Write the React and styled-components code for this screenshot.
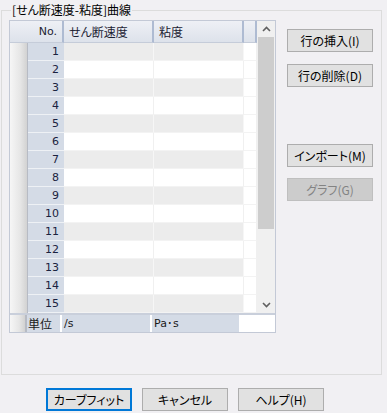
import React from 'react';
import styled, { createGlobalStyle } from 'styled-components';

const GlobalStyle = createGlobalStyle`
  html, body {
    margin: 0;
    padding: 0;
    background: #f1f0f3;
  }
  body {
    font-family: "Noto Sans CJK JP", "Noto Sans", sans-serif;
    font-size: 12px;
    font-feature-settings: "palt";
    color: #000;
  }
`;

const Page = styled.div`
  width: 387px;
  height: 413px;
  box-sizing: border-box;
  padding-top: 10px;
  background: #f1f0f3;
`;

const Group = styled.div`
  margin: 0 5px 0 1px;
  height: 365px;
  box-sizing: border-box;
  border: 1px solid #dcdcdc;
  padding: 0 0 0 7px;
`;

const Legend = styled.div`
  display: table;
  margin: -9px 0 0 2px;
  padding: 0 1px;
  height: 16px;
  line-height: 16px;
  background: #f1f0f3;
  font-size: 12px;
  white-space: nowrap;
`;

const Content = styled.div`
  display: flex;
  align-items: flex-start;
  gap: 11px;
  margin-top: 2px;
`;

const TableFrame = styled.div`
  width: 267px;
  height: 313px;
  box-sizing: border-box;
  border: 1px solid #c3c9d6;
  background: #fff;
  display: flex;
  flex-direction: column;
`;

const Body = styled.div`
  display: flex;
  height: 292px;
`;

const Grid = styled.div`
  display: grid;
  grid-template-columns: 18px 36px 90px 90px 13px;
  grid-template-rows: 22px repeat(15, 18px);
`;

const HeadCell = styled.div`
  grid-column: ${p => p.$span || 'auto'};
  box-sizing: border-box;
  background: linear-gradient(#eef0f5, #dde2eb);
  border-right: 2px solid #aebbd2;
  border-bottom: 1px solid #c5ccd9;
  display: flex;
  align-items: center;
  justify-content: ${p => (p.$right ? 'flex-end' : 'flex-start')};
  padding: ${p => (p.$right ? '0 5px 0 0' : '0 0 0 5px')};
  font-family: ${p => (p.$latin ? '"DejaVu Sans", sans-serif' : 'inherit')};
  font-size: ${p => (p.$latin ? '11px' : '12px')};
  color: #1c2233;
  white-space: nowrap;
`;

const Strip = styled.div`
  grid-column: 1;
  grid-row: ${p => p.$rows || 'auto'};
  box-sizing: border-box;
  background: linear-gradient(to right, #f6f6f6, #e6e6e6 60%, #d2d2d2);
  border-right: 1px solid #b7bbc4;
`;

const NumCell = styled.div`
  box-sizing: border-box;
  background: #d4dbe6;
  border-bottom: 1px solid #eef1f5;
  display: flex;
  align-items: center;
  justify-content: flex-end;
  padding-right: 5px;
  font-family: "DejaVu Sans", sans-serif;
  font-size: 11px;
  color: #1a2240;
`;

const DataCell = styled.div`
  box-sizing: border-box;
  background: ${p => (p.$odd ? '#ececec' : '#ffffff')};
  border-right: 1px solid ${p => (p.$odd ? '#f6f6f6' : '#f0f0f0')};
  border-bottom: 1px solid #f3f3f3;
`;

const Scrollbar = styled.div`
  width: 18px;
  display: flex;
  flex-direction: column;
  background: #f0f0f0;
`;

const Arrow = styled.div`
  height: 16px;
  display: flex;
  align-items: center;
  justify-content: center;
`;

const Thumb = styled.div`
  height: 192px;
  margin: 0 1px;
  background: #cdcdcd;
`;

const Track = styled.div`
  flex: 1;
`;

const FooterLine = styled.div`
  height: 2px;
  background: #c9cfdb;
`;

const Footer = styled.div`
  display: grid;
  grid-template-columns: 17px 35px 90px 89px 1fr;
  height: 16px;
`;

const FootStrip = styled.div`
  background: linear-gradient(to right, #f6f6f6, #e6e6e6 60%, #d2d2d2);
  border-right: 2px solid #b7bbc4;
`;

const FootCell = styled.div`
  box-sizing: border-box;
  background: ${p => (p.$blank ? '#fff' : '#d4dbe6')};
  border-right: 2px solid #fff;
  display: flex;
  align-items: center;
  padding-left: ${p => (p.$latin ? '2px' : '1px')};
  font-family: ${p => (p.$latin ? '"DejaVu Sans", sans-serif' : 'inherit')};
  font-size: ${p => (p.$latin ? '11px' : '12px')};
  color: #1a1a1a;
  white-space: nowrap;
`;

const SideButtons = styled.div`
  display: flex;
  flex-direction: column;
  padding-top: 9px;
`;

const Button = styled.div`
  width: ${p => p.$w || 86}px;
  height: 23px;
  box-sizing: border-box;
  margin-top: ${p => p.$top || 0}px;
  background: ${p => (p.$disabled ? '#cccccc' : '#e1e1e1')};
  border: ${p => (p.$focus ? '2px solid #0078d7' : `1px solid ${p.$disabled ? '#bfbfbf' : '#adadad'}`)};
  color: ${p => (p.$disabled ? '#838383' : '#000')};
  display: flex;
  align-items: center;
  justify-content: center;
  font-size: 12px;
  white-space: nowrap;
`;

const BottomBar = styled.div`
  display: flex;
  gap: 10px;
  padding: 13px 0 0 46px;
`;

const Chevron = ({ up }) => (
  <svg width="9" height="6" viewBox="0 0 9 6">
    <path
      d={up ? 'M1 5 L4.5 1.5 L8 5' : 'M1 1 L4.5 4.5 L8 1'}
      fill="none"
      stroke="#606060"
      strokeWidth="1.6"
    />
  </svg>
);

const rows = Array.from({ length: 15 }, (_, i) => i + 1);

export default function App() {
  return (
    <Page>
      <GlobalStyle />
      <Group>
        <Legend>[せん断速度-粘度]曲線</Legend>
        <Content>
          <TableFrame>
            <Body>
              <Grid>
                <HeadCell $span="1 / 3" $right $latin>No.</HeadCell>
                <HeadCell>せん断速度</HeadCell>
                <HeadCell>粘度</HeadCell>
                <HeadCell />
                <Strip $rows="2 / span 15" />
                {rows.map(n => (
                  <React.Fragment key={n}>
                    <NumCell>{n}</NumCell>
                    <DataCell $odd={n % 2 === 1} />
                    <DataCell $odd={n % 2 === 1} />
                    <DataCell />
                  </React.Fragment>
                ))}
              </Grid>
              <Scrollbar>
                <Arrow><Chevron up /></Arrow>
                <Thumb />
                <Track />
                <Arrow><Chevron /></Arrow>
              </Scrollbar>
            </Body>
            <FooterLine />
            <Footer>
              <FootStrip />
              <FootCell>単位</FootCell>
              <FootCell $latin>/s</FootCell>
              <FootCell $latin>Pa･s</FootCell>
              <FootCell $blank />
            </Footer>
          </TableFrame>
          <SideButtons>
            <Button>行の挿入(I)</Button>
            <Button $top={12}>行の削除(D)</Button>
            <Button $top={57}>インポート(M)</Button>
            <Button $top={11} $disabled>グラフ(G)</Button>
          </SideButtons>
        </Content>
      </Group>
      <BottomBar>
        <Button $focus>カーブフィット</Button>
        <Button>キャンセル</Button>
        <Button>ヘルプ(H)</Button>
      </BottomBar>
    </Page>
  );
}
